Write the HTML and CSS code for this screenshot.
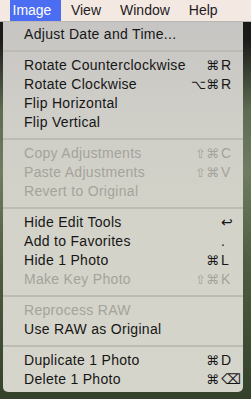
FILE: index.html
```html
<!DOCTYPE html>
<html>
<head>
<meta charset="utf-8">
<link rel="stylesheet" href="styles.css">
</head>
<body>
<div class="screen">
  <div class="menubar">
    <span class="title active">Image</span>
    <span class="title">View</span>
    <span class="title">Window</span>
    <span class="title">Help</span>
  </div>
  <div class="menu">
    <div class="item"><span class="label">Adjust Date and Time...</span></div>
    <div class="sep"></div>
    <div class="item"><span class="label">Rotate Counterclockwise</span><span class="mods">⌘</span><span class="key">R</span></div>
    <div class="item"><span class="label">Rotate Clockwise</span><span class="mods">⌥⌘</span><span class="key">R</span></div>
    <div class="item"><span class="label">Flip Horizontal</span></div>
    <div class="item"><span class="label">Flip Vertical</span></div>
    <div class="sep"></div>
    <div class="item disabled"><span class="label">Copy Adjustments</span><span class="mods">⇧⌘</span><span class="key">C</span></div>
    <div class="item disabled"><span class="label">Paste Adjustments</span><span class="mods">⇧⌘</span><span class="key">V</span></div>
    <div class="item disabled"><span class="label">Revert to Original</span></div>
    <div class="sep"></div>
    <div class="item"><span class="label">Hide Edit Tools</span><span class="mods"></span><span class="key">↩</span></div>
    <div class="item"><span class="label">Add to Favorites</span><span class="mods"></span><span class="key">.</span></div>
    <div class="item"><span class="label">Hide 1 Photo</span><span class="mods">⌘</span><span class="key">L</span></div>
    <div class="item disabled"><span class="label">Make Key Photo</span><span class="mods">⇧⌘</span><span class="key">K</span></div>
    <div class="sep"></div>
    <div class="item disabled"><span class="label">Reprocess RAW</span></div>
    <div class="item"><span class="label">Use RAW as Original</span></div>
    <div class="sep"></div>
    <div class="item"><span class="label">Duplicate 1 Photo</span><span class="mods">⌘</span><span class="key">D</span></div>
    <div class="item"><span class="label">Delete 1 Photo</span><span class="mods">⌘</span><span class="key">⌫</span></div>
  </div>
</div>
</body>
</html>
```
FILE: styles.css
```css
html, body {
  margin: 0;
  padding: 0;
}
body {
  width: 251px;
  height: 399px;
  overflow: hidden;
  font-family: "Liberation Sans", "DejaVu Sans", sans-serif;
  background: linear-gradient(to bottom, #141414 0px, #1c1c1a 40px, #5d6b50 110px, #6f7c62 170px, #4f5e40 260px, #3f4d33 340px, #34412b 399px);
}
.screen {
  width: 251px;
  height: 399px;
}
.menubar {
  height: 22px;
  display: flex;
  padding-left: 10px;
  background: #f4e8e3;
  border-bottom: 1px solid #b9b6b3;
  box-sizing: border-box;
}
.title {
  font-size: 14px;
  line-height: 21px;
  padding: 0 9.5px;
  color: #1c1c1c;
}
.title.active {
  padding-left: 2.5px;
  padding-right: 10px;
  background: #4b6df1;
  color: #ffffff;
}
.menu {
  margin-left: 3px;
  width: 240px;
  padding: 3px 0 3px;
  background: linear-gradient(to bottom, #c7c5c3 0px, #cecdc7 80px, #d4d3c9 200px, #d6d5cb 370px);
  border-radius: 0 0 5px 5px;
}
.item {
  height: 19px;
  line-height: 19px;
  display: grid;
  grid-template-columns: 1fr auto 18px;
  padding: 0 4px 0 21px;
  font-size: 14px;
  letter-spacing: 0.3px;
  color: #161616;
}
.item.disabled {
  color: #a4a39c;
}
.label {
  white-space: nowrap;
}
.mods {
  text-align: right;
  padding-right: 2px;
  letter-spacing: 0;
  font-size: 13px;
}
.key {
  text-align: left;
  letter-spacing: 0;
}
.sep {
  padding: 6px 0 4px;
}
.sep::before {
  content: "";
  display: block;
  height: 2px;
  background: #bdbbb4;
}
```
